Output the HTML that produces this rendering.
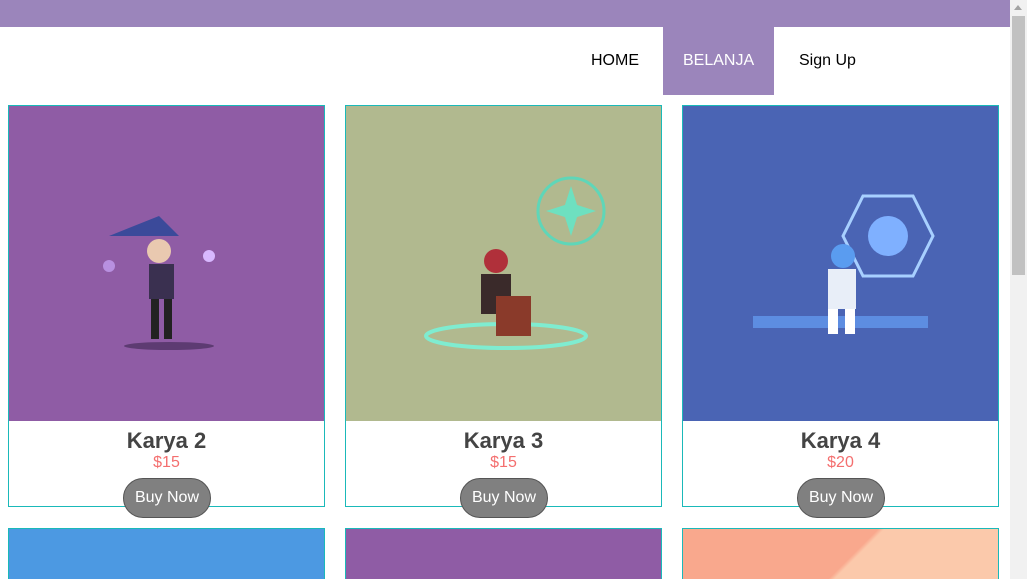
<!DOCTYPE html>
<html><head><style>
*{margin:0;padding:0;box-sizing:border-box}
html,body{width:1027px;height:579px;overflow:hidden}
body{font-family:"Liberation Sans",Arial,sans-serif;background:#fff;position:relative}
.top{position:absolute;left:0;top:0;width:1010px;height:27px;background:#9b85bb}
.nav a{position:absolute;top:27px;height:68px;line-height:67px;font-size:16px;color:#000;text-decoration:none;padding:0 20px}
.sb{position:absolute;right:0;top:0;width:17px;height:579px;background:#f1f1f1}
.sb .th{position:absolute;left:2px;top:16px;width:13px;height:259px;background:#c1c1c1}
.sb .ar{position:absolute;left:4px;top:5px;width:0;height:0;border-left:4px solid transparent;border-right:4px solid transparent;border-bottom:5px solid #a3a3a3}
.card{position:absolute;width:317px;height:402px;border:1px solid #1ab9b9;background:#fff;overflow:hidden}
.card.s{height:51px;border-bottom:none}
.img{position:absolute;left:0;top:0;width:315px;height:315px}
.card h2{position:absolute;top:322px;width:100%;text-align:center;font-size:22px;color:#444;font-weight:bold}
.card .p{position:absolute;top:348px;width:100%;text-align:center;font-size:16px;color:#f46f6f}
.bb{position:absolute;top:478px;width:88px;height:40px;border:1px solid #555;border-radius:20px;background:#808080;color:#fff;font-size:16px;text-align:center;line-height:37px}
</style></head><body>
<div class="top"></div>
<div class="nav">
<a style="left:571px">HOME</a>
<a style="left:663px;width:111px;background:#9b85bb;color:#fff">BELANJA</a>
<a style="left:779px">Sign Up</a>
</div>
<div class="card" style="left:8px;top:105px"><div class="img" style="background:#8f5ca5">
<svg width="315" height="315"><ellipse cx="160" cy="240" rx="45" ry="4" fill="#5d3b72"/><path d="M100 130 L150 110 L170 130 Z" fill="#3b4a9a"/><circle cx="150" cy="145" r="12" fill="#e9c9b0"/><rect x="140" y="158" width="25" height="35" fill="#3a3050"/><rect x="142" y="193" width="8" height="40" fill="#222"/><rect x="155" y="193" width="8" height="40" fill="#222"/><circle cx="200" cy="150" r="6" fill="#d8b8ff"/><circle cx="100" cy="160" r="6" fill="#b890e0"/></svg></div>
<h2>Karya 2</h2><div class="p">$15</div></div>
<div class="card" style="left:345px;top:105px"><div class="img" style="background:#b1b98f">
<svg width="315" height="315"><circle cx="225" cy="105" r="33" fill="none" stroke="#5fd6b8" stroke-width="3"/><path d="M225 80 L233 105 L225 130 L217 105Z M200 105 L225 97 L250 105 L225 113Z" fill="#6ee0c0"/><ellipse cx="160" cy="230" rx="80" ry="12" fill="none" stroke="#7fecd0" stroke-width="4"/><circle cx="150" cy="155" r="12" fill="#b0303a"/><rect x="135" y="168" width="30" height="40" fill="#3a2a2a"/><rect x="150" y="190" width="35" height="40" fill="#8a3a2a"/></svg></div>
<h2>Karya 3</h2><div class="p">$15</div></div>
<div class="card" style="left:682px;top:105px"><div class="img" style="background:#4a64b4">
<svg width="315" height="315"><polygon points="180,90 230,90 250,130 230,170 180,170 160,130" fill="none" stroke="#a8d0ff" stroke-width="3"/><circle cx="205" cy="130" r="20" fill="#7fb0ff"/><rect x="70" y="210" width="175" height="12" fill="#6aa8ff" opacity=".6"/><circle cx="160" cy="150" r="12" fill="#5a9cf0"/><rect x="145" y="163" width="28" height="40" fill="#e8eef8"/><rect x="145" y="203" width="10" height="25" fill="#fff"/><rect x="162" y="203" width="10" height="25" fill="#fff"/></svg></div>
<h2>Karya 4</h2><div class="p">$20</div></div>
<div class="bb" style="left:123px">Buy Now</div>
<div class="bb" style="left:460px">Buy Now</div>
<div class="bb" style="left:797px">Buy Now</div>
<div class="card s" style="left:8px;top:528px"><div class="img" style="background:#4c99e2"></div></div>
<div class="card s" style="left:345px;top:528px"><div class="img" style="background:#8f5ca5"></div></div>
<div class="card s" style="left:682px;top:528px"><div class="img" style="background:linear-gradient(135deg,#f9a88d 0,#f9a88d 31%,#fbc9ab 32%)"></div></div>
<div class="sb"><div class="ar"></div><div class="th"></div></div>
</body></html>
